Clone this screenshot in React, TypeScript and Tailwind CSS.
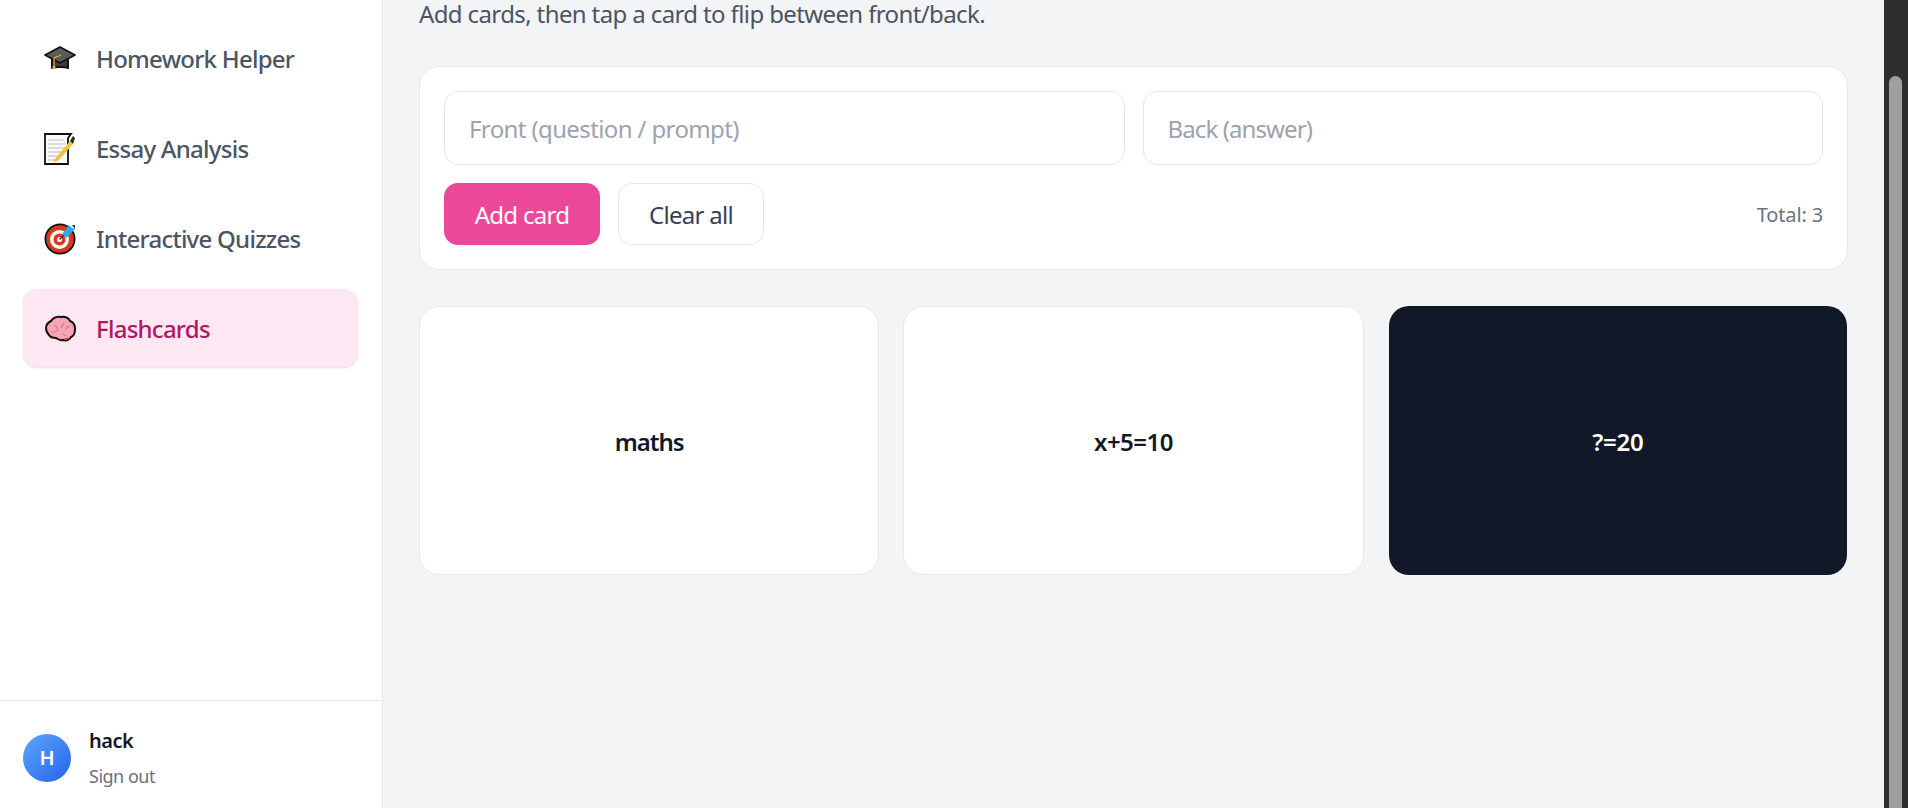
const GradCap = () => (
  <svg viewBox="0 0 32 32" className="w-[32px] h-[32px]">
    <path d="M8 13v12c3-1.500 13-1.500 16 0V13z" fill="#3d3d3d" stroke="#111" strokeWidth="2" strokeLinejoin="round" />
    <path d="M16 4 31 12 16 20 1 12z" fill="#5a5a5a" stroke="#111" strokeWidth="1.6" strokeLinejoin="round" />
    <path d="M17 12 10 15v9" fill="none" stroke="#d9a93c" strokeWidth="1.3" />
    <path d="M8.500 23h3v3h-3z" fill="#d9a93c" />
  </svg>
)

const Memo = () => (
  <svg viewBox="0 0 32 32" className="w-[32px] h-[32px]">
    <path d="M1 1h26l-3 4v26H1z" fill="#fafafa" stroke="#111" strokeWidth="1.800" strokeLinejoin="miter" />
    <path d="M4 7h16M4 11h18M4 15h18M4 19h14M4 23h10M4 27h10" stroke="#bdbdbd" strokeWidth="1.2" />
    <path d="M10 27 26 8l3 3-15 17-5 1z" fill="#f4c430" />
    <path d="M26 8l3-5 2 2-2 6z" fill="#2a2a2a" />
  </svg>
)

const Target = () => (
  <svg viewBox="0 0 32 32" className="w-[32px] h-[32px]">
    <circle cx="16" cy="16" r="14.600" fill="#d9381e" stroke="#111" strokeWidth="1.800" />
    <circle cx="15.500" cy="16.500" r="9.500" fill="#fff" />
    <circle cx="15.500" cy="16.500" r="6" fill="#d9381e" />
    <circle cx="15.500" cy="16.500" r="2.500" fill="#fff" />
    <path d="M15.500 16.500 24 8" stroke="#333" strokeWidth="1.400" />
    <path d="M18 11 25 2l3 3 3 1-9 9z" fill="#29a9e8" />
    <path d="M28 2l3 0v4z" fill="#1d2b3a" />
  </svg>
)

const Brain = () => (
  <svg viewBox="0 0 32 32" className="w-[32px] h-[32px]">
    <path
      d="M2 15c0-4 3-6 5-7 2-3 6-5 10-4 4-1 8 1 9 4 3 1 5 4 5 8 0 4-1 7-4 8-1 3-5 4-8 3-3 1-5-1-7-2-3 0-6-1-7-3-2-2-3-4-3-7z"
      fill="#f3a6b4"
      stroke="#1a1010"
      strokeWidth="2"
      strokeLinejoin="round"
    />
    <path d="M10 12c2 1 4 3 4 6M20 9c0 3-2 4-3 6M26 13c-2 0-4 2-4 4M7 19c2 0 4 0 6-1M18 21c2 0 3 1 4 2" fill="none" stroke="#d97a8e" strokeWidth="1.200" />
    <path d="M19 26c2-1 5-1 7-2l-1 2c-2 1-4 1-6 0z" fill="#e0455f" />
  </svg>
)

const navItems = [
  { label: 'Homework Helper', icon: <GradCap /> },
  { label: 'Essay Analysis', icon: <Memo /> },
  { label: 'Interactive Quizzes', icon: <Target /> },
  { label: 'Flashcards', icon: <Brain />, active: true },
]

const App = () => {
  return (
    <div className="flex h-screen overflow-hidden bg-[#f3f4f6] font-['Noto_Sans','Open_Sans',sans-serif]">
      <aside className="w-[383px] shrink-0 h-full flex flex-col bg-white border-r border-[#e5e7eb]">
        <nav className="flex-1 flex flex-col gap-[12px] pt-[19px] pl-[23px] pr-[24px]">
          {navItems.map((item) => (
            <a
              key={item.label}
              className={
                item.active
                  ? 'h-[78px] flex items-center gap-[20px] pl-[21px] pt-[2px] rounded-[14px] bg-[#fce7f3] text-[#b0185f] shadow-sm'
                  : 'h-[78px] flex items-center gap-[20px] pl-[21px] pt-[2px] rounded-[14px] text-[#4b5563]'
              }
            >
              {item.icon}
              <span className="text-[24px] font-medium tracking-[-0.75px]">{item.label}</span>
            </a>
          ))}
        </nav>
        <div className="h-[108px] border-t border-[#e5e7eb] flex items-start gap-[18px] px-[23px] pt-[25px]">
          <div className="mt-[8px] w-[48px] h-[48px] rounded-full bg-gradient-to-br from-[#60a5fa] to-[#2563eb] flex items-center justify-center text-white font-semibold text-[20px]">
            H
          </div>
          <div className="flex flex-col">
            <span className="text-[20px] font-semibold text-[#111827] leading-[30px] tracking-[-0.5px]">hack</span>
            <span className="mt-[6px] text-[18px] text-[#6b7280] leading-[28px] tracking-[-0.5px]">Sign out</span>
          </div>
        </div>
      </aside>

      <main className="flex-1 min-w-0 pl-[36px] pr-[36px]">
        <p className="pt-[4px] text-[24px] leading-[20px] text-[#4b5563] tracking-[-0.62px]">
          Add cards, then tap a card to flip between front/back.
        </p>

        <div className="mt-[42px] bg-white border border-[#e5e7eb] rounded-[20px] p-[24px]">
          <div className="grid grid-cols-2 gap-[18px]">
            <input
              placeholder="Front (question / prompt)"
              className="h-[74px] px-[24px] rounded-[14px] border border-[#e5e7eb] text-[24px] tracking-[-0.62px] outline-none placeholder:text-[#9ca3af]"
            />
            <input
              placeholder="Back (answer)"
              className="h-[74px] px-[24px] rounded-[14px] border border-[#e5e7eb] text-[24px] tracking-[-0.9px] outline-none placeholder:text-[#9ca3af]"
            />
          </div>
          <div className="mt-[18px] flex items-center gap-[18px]">
            <button className="w-[156px] h-[62px] pt-[2px] rounded-[14px] bg-[#ec4899] text-white text-[24px] tracking-[-0.7px]">
              Add card
            </button>
            <button className="w-[146px] h-[62px] pt-[2px] rounded-[14px] bg-white border border-[#e5e7eb] text-[#374151] text-[24px] tracking-[-0.7px]">
              Clear all
            </button>
            <span className="ml-auto pt-[2px] text-[20px] text-[#6b7280] tracking-[-0.15px]">Total: 3</span>
          </div>
        </div>

        <div className="mt-[36px] grid grid-cols-3 gap-[24px]">
          <div className="h-[269px] pt-[2px] flex items-center justify-center rounded-[20px] bg-white border border-[#e5e7eb] text-[#111827] text-[24px] font-semibold tracking-[-1px]">
            maths
          </div>
          <div className="h-[269px] pt-[2px] flex items-center justify-center rounded-[20px] bg-white border border-[#e5e7eb] text-[#111827] text-[24px] font-semibold tracking-[-0.5px]">
            x+5=10
          </div>
          <div className="mx-[1px] h-[269px] pt-[2px] flex items-center justify-center rounded-[20px] bg-[#111827] text-white text-[24px] font-semibold tracking-[-0.3px]">
            ?=20
          </div>
        </div>
      </main>

      <div className="w-[24px] shrink-0 h-full bg-[#2e2e2e] pl-[5px]">
        <div className="mt-[76px] w-[13px] h-full rounded-t-full bg-[#9f9f9f]" />
      </div>
    </div>
  )
}

export default App
